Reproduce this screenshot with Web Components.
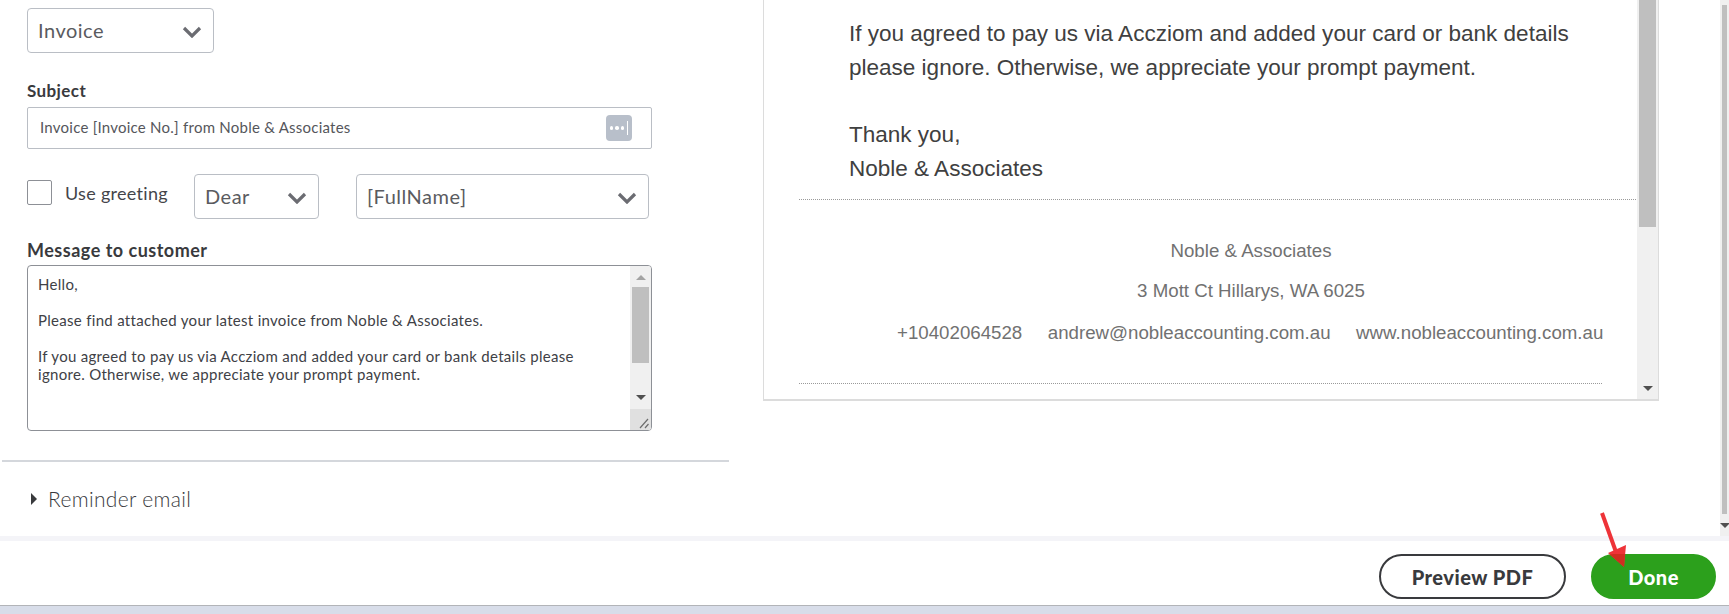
<!DOCTYPE html>
<html>
<head>
<style>
html, body { margin: 0; height: 100%; overflow: hidden; background: #fff; }
body { font-family: Lato, "Open Sans", sans-serif; color: #393a3d; }
</style>
<script>
// little down chevron shared by the selects
const CHEVRON = `<svg width="20" height="12" viewBox="0 0 20 12"><path d="M2 2 L10 10 L18 2" fill="none" stroke="#6b6c72" stroke-width="3.2"/></svg>`;

class DropSelect extends HTMLElement {
  constructor() {
    super();
    this.attachShadow({mode: 'open'}).innerHTML = `
<style>
:host {
    display: flex;
    box-sizing: border-box;
    height: 45px;
    align-items: center;
    justify-content: space-between;
    padding: 0 11px 1px 10px;
    border: 1px solid #babec5;
    border-radius: 4px;
    background: #fff;
    font-size: 20px;
    letter-spacing: .5px;
    font-weight: 400;
    color: #5a5b60;
}
svg { display: block; margin-top: 3px; }
</style>
<slot></slot>${CHEVRON}`;
  }
}
customElements.define('drop-select', DropSelect);

class SubjectField extends HTMLElement {
  constructor() {
    super();
    this.attachShadow({mode: 'open'}).innerHTML = `
<style>
:host {
    display: flex;
    box-sizing: border-box;
    height: 42px;
    align-items: center;
    justify-content: space-between;
    padding: 0 19px 0 12px;
    border: 1px solid #babec5;
    border-radius: 2px;
    font-size: 15px;
    letter-spacing: .24px;
    color: #55565b;
}
.text { margin-bottom: 2px; }
.token {
    display: flex;
    width: 26px;
    height: 26px;
    border-radius: 4px;
    background: #b8bfca;
    align-items: center;
    justify-content: center;
    gap: 2px;
}
.token i { width: 3.5px; height: 3.5px; border-radius: 50%; background: #fff; }
.token b { width: 1px; height: 14px; background: #fff; margin-left: 1px; }
</style>
<span class="text"><slot></slot></span>
<span class="token"><i></i><i></i><i></i><b></b></span>`;
  }
}
customElements.define('subject-field', SubjectField);

class ScrollBar extends HTMLElement {
  // thumb-top / thumb-height come in as attributes, arrows are just triangles
  connectedCallback() {
    const top = this.getAttribute('thumb-top') || 0;
    const height = this.getAttribute('thumb-height') || 0;
    const grip = this.hasAttribute('grip');
    const up = this.hasAttribute('up');
    this.attachShadow({mode: 'open'}).innerHTML = `
<style>
:host {
    display: block;
    position: relative;
    background: #f0f0f0;
    height: 100%;
}
.thumb { position: absolute; left: 2px; right: 2px; background: #bfbfbf; }
.up, .down {
    position: absolute;
    left: 50%;
    margin-left: -5px;
    border-left: 5px solid transparent;
    border-right: 5px solid transparent;
}
.up { top: 9px; border-bottom: 5px solid #a3a3a3; }
.down { bottom: var(--down-bottom, 8px); border-top: 5px solid #505050; }
.grip { position: absolute; left: 0; right: 0; bottom: 0; height: 21px; background: #e0e0e0; }
</style>
${up ? '<div class="up"></div>' : ''}
<div class="thumb" style="top:${top}px;height:${height}px"></div>
<div class="down"></div>
${grip ? `<div class="grip"><svg width="21" height="21" viewBox="0 0 21 21" style="position:absolute;left:0;top:0"><path d="M10 19 L18 10 M15 19 L18.5 15" stroke="#6d6d6d" stroke-width="1.2" fill="none"/></svg></div>` : ''}`;
  }
}
customElements.define('scroll-bar', ScrollBar);

class MessageBox extends HTMLElement {
  constructor() {
    super();
    this.attachShadow({mode: 'open'}).innerHTML = `
<style>
:host {
    display: flex;
    box-sizing: border-box;
    height: 166px;
    border: 1px solid #8d9096;
    border-radius: 4px;
    overflow: hidden;
}
.text {
    flex: 1;
    padding: 9px 40px 0 10px;
    font-size: 15px;
    letter-spacing: .3px;
    line-height: 18px;
    color: #404146;
}
.bar { width: 21px; flex: none; }
scroll-bar { --down-bottom: 30px; }
</style>
<div class="text"><slot></slot></div>
<div class="bar"><scroll-bar up grip thumb-top="21" thumb-height="76"></scroll-bar></div>`;
  }
}
customElements.define('message-box', MessageBox);

class EmailForm extends HTMLElement {
  constructor() {
    super();
    this.attachShadow({mode: 'open'}).innerHTML = `
<style>
:host {
    display: block;
    flex: none;
    width: 727px;
    margin-left: 2px;
    font-size: 15px;
}
.inner { padding: 8px 0 0 25px; width: 625px; }
.label { font-weight: 700; font-size: 17px; letter-spacing: .4px; line-height: 20px; color: #393a3d; }
.type { width: 187px; margin-bottom: 28px; }
.subject { margin-top: 6px; }
.greet { display: flex; align-items: flex-start; margin-top: 25px; }
.check { box-sizing: border-box; width: 25px; height: 25px; margin-top: 6px; border: 1px solid #8d9096; border-radius: 2px; flex: none; }
.greet-text { margin: 8px 0 0 13px; width: 129px; font-size: 18px; letter-spacing: .3px; line-height: 22px; font-weight: 400; color: #44454a; }
.dear { width: 125px; }
.name { width: 293px; margin-left: 37px; }
.label.msg-label { margin-top: 21px; margin-bottom: 5px; font-size: 18px; letter-spacing: .5px; }
.rule { height: 2px; background: #d4d7dc; margin-top: 29px; }
.reminder { display: flex; align-items: center; padding: 25px 0 0 29px; font-size: 21px; line-height: 24px; font-weight: 300; color: #393a3d; letter-spacing: .33px; }
.arrow { width: 0; height: 0; border-left: 6px solid #393a3d; border-top: 6px solid transparent; border-bottom: 6px solid transparent; margin-right: 11px; }
</style>
<div class="inner">
  <drop-select class="type">Invoice</drop-select>
  <div class="label">Subject</div>
  <subject-field class="subject">Invoice [Invoice No.] from Noble &amp; Associates</subject-field>
  <div class="greet">
    <span class="check"></span>
    <span class="greet-text">Use greeting</span>
    <drop-select class="dear">Dear</drop-select>
    <drop-select class="name">[FullName]</drop-select>
  </div>
  <div class="label msg-label">Message to customer</div>
  <message-box>Hello,<br><br>Please find attached your latest invoice from Noble &amp; Associates.<br><br>If you agreed to pay us via Accziom and added your card or bank details please ignore. Otherwise, we appreciate your prompt payment.</message-box>
</div>
<div class="rule"></div>
<div class="reminder"><span class="arrow"></span>Reminder email</div>`;
  }
}
customElements.define('email-form', EmailForm);

class EmailPreview extends HTMLElement {
  constructor() {
    super();
    this.attachShadow({mode: 'open'}).innerHTML = `
<style>
:host {
    display: flex;
    box-sizing: border-box;
    flex: none;
    width: 896px;
    height: 401px;
    margin-left: 34px;
    border: solid #dcdcdc;
    border-width: 0 1px 2px 1px;
    font-family: "Liberation Sans", Arial, sans-serif;
    overflow: hidden;
}
.page { flex: 1; padding: 17px 1px 0 35px; }
.body { padding-left: 50px; font-size: 22.53px; line-height: 33.7px; color: #404040; }
.dots { border-top: 1px dotted #9a9a9a; margin-top: 13px; }
.foot { padding: 39px 0 0 67px; color: #717171; font-size: 18.7px; text-align: center; }
.foot div { line-height: 24px; margin-bottom: 16px; }
.contact { display: flex; gap: 25.5px; margin-left: 31px; margin-top: 18px; white-space: nowrap; }
.dots.short { margin-top: 38px; margin-right: 34px; }
.bar { width: 21px; flex: none; }
</style>
<div class="page">
  <div class="body">If you agreed to pay us via Accziom and added your card or bank details<br>please ignore. Otherwise, we appreciate your prompt payment.<br><br>Thank you,<br>Noble &amp; Associates</div>
  <div class="dots"></div>
  <div class="foot">
    <div>Noble &amp; Associates</div>
    <div>3 Mott Ct Hillarys, WA 6025</div>
    <div class="contact"><span>+10402064528</span><span>andrew@nobleaccounting.com.au</span><span>www.nobleaccounting.com.au</span></div>
  </div>
  <div class="dots short"></div>
</div>
<div class="bar"><scroll-bar thumb-top="0" thumb-height="227"></scroll-bar></div>`;
  }
}
customElements.define('email-preview', EmailPreview);

class PillButton extends HTMLElement {
  constructor() {
    super();
    this.attachShadow({mode: 'open'}).innerHTML = `
<style>
:host {
    display: flex;
    box-sizing: border-box;
    height: 45px;
    align-items: center;
    justify-content: center;
    border-radius: 23px;
    border: 2px solid #393a3d;
    font-size: 20px;
    font-weight: 900;
    letter-spacing: .5px;
    color: #393a3d;
}
:host([primary]) { background: #2ca01c; border-color: #2ca01c; color: #fff; }
</style>
<slot></slot>`;
  }
}
customElements.define('pill-button', PillButton);

class ActionBar extends HTMLElement {
  constructor() {
    super();
    this.attachShadow({mode: 'open'}).innerHTML = `
<style>
:host {
    display: flex;
    box-sizing: border-box;
    height: 64px;
    padding: 13px 13px 0 0;
    justify-content: flex-end;
    gap: 25px;
    background: #fff;
}
.preview { width: 187px; }
.done { width: 125px; }
</style>
<pill-button class="preview">Preview PDF</pill-button>
<pill-button class="done" primary>Done</pill-button>`;
  }
}
customElements.define('action-bar', ActionBar);

class InvoiceScreen extends HTMLElement {
  constructor() {
    super();
    this.attachShadow({mode: 'open'}).innerHTML = `
<style>
:host { display: block; position: relative; height: 614px; overflow: hidden; }
.main { display: flex; height: 536px; overflow: hidden; }
.outer { width: 9px; margin-left: auto; flex: none; }
.outer scroll-bar { --down-bottom: 8px; }
.band { height: 5px; background: #f4f4f8; }
.desk { height: 9px; box-sizing: border-box; border-top: 1px solid #b2b4b8; background: #d8dde9; }
.mark { position: absolute; left: 0; top: 0; pointer-events: none; }
</style>
<div class="main">
  <email-form></email-form>
  <email-preview></email-preview>
  <div class="outer"><scroll-bar thumb-top="5" thumb-height="509"></scroll-bar></div>
</div>
<div class="band"></div>
<action-bar></action-bar>
<div class="desk"></div>
<svg class="mark" width="1729" height="614">
  <defs>
    <clipPath id="on-done"><rect x="1591" y="554" width="125" height="45" rx="22.5"/></clipPath>
  </defs>
  <path d="M1602 513 L1616 552" stroke="#ee3338" stroke-width="4" fill="none"/>
  <path d="M1608 553 L1626 545 L1624 567 Z" fill="#ee3338"/>
  <!-- the red goes darker where it sits on the green button -->
  <path d="M1608 553 L1626 545 L1624 567 Z" fill="#cf2e20" clip-path="url(#on-done)"/>
</svg>`;
  }
}
customElements.define('invoice-screen', InvoiceScreen);
</script>
</head>
<body>
<invoice-screen></invoice-screen>
</body>
</html>
